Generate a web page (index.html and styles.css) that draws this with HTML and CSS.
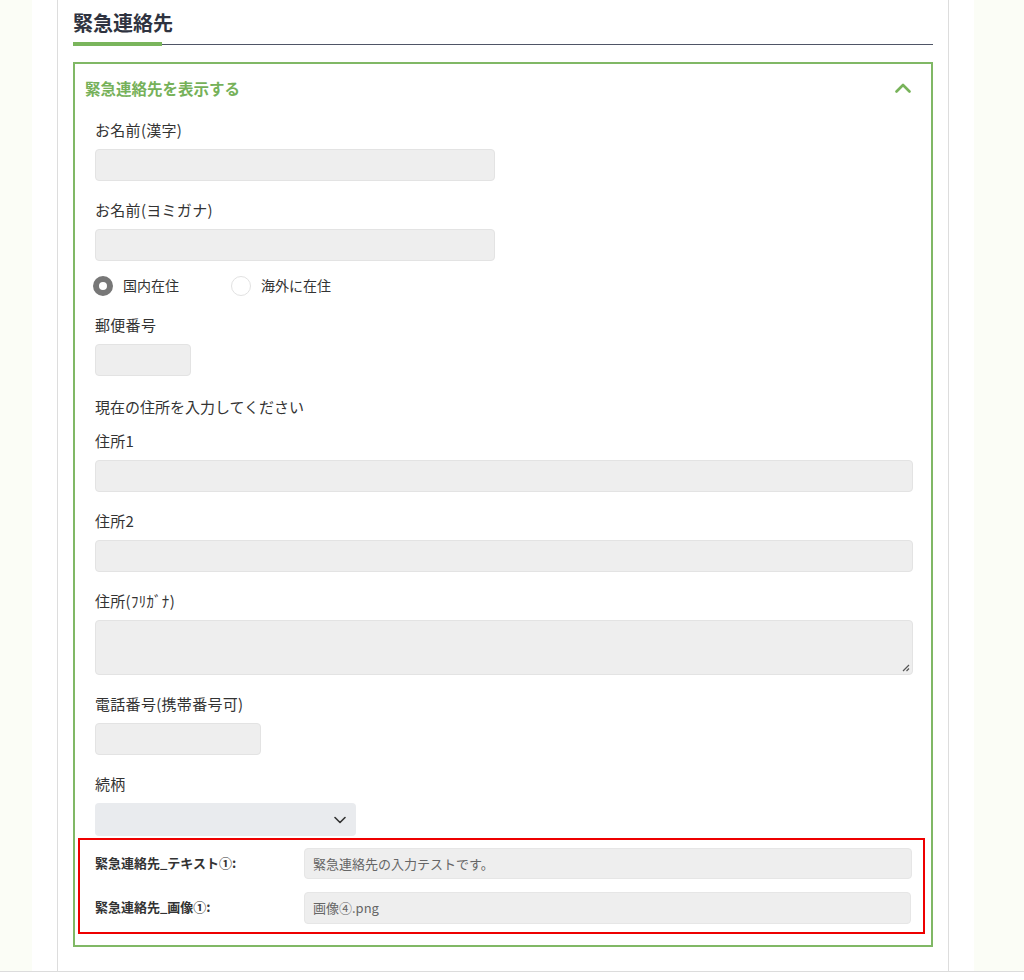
FILE: index.html
```html
<!DOCTYPE html>
<html lang="ja">
<head>
<meta charset="utf-8">
<title>緊急連絡先</title>
<link rel="stylesheet" href="styles.css">
</head>
<body>
<div class="page">
  <div class="column">
    <div class="card">
      <h2 class="section-title">緊急連絡先</h2>
      <div class="accordion">
        <div class="acc-head">
          <span class="acc-title">緊急連絡先を表示する</span>
          <svg class="acc-chevron" width="16" height="10" viewBox="0 0 16 10"><polyline points="1.5,8.5 8,2 14.5,8.5" fill="none" stroke="#78b35a" stroke-width="2.6" stroke-linecap="round" stroke-linejoin="round"/></svg>
        </div>
        <div class="acc-body">
          <div class="field">
            <label class="label">お名前(漢字)</label>
            <div class="input w400"></div>
          </div>
          <div class="field tight">
            <label class="label">お名前(ヨミガナ)</label>
            <div class="input w400"></div>
          </div>
          <div class="radios">
            <span class="radio"><span class="dot checked"></span><span class="rlabel">国内在住</span></span>
            <span class="radio"><span class="dot"></span><span class="rlabel">海外に在住</span></span>
          </div>
          <div class="field">
            <label class="label">郵便番号</label>
            <div class="input w96"></div>
          </div>
          <p class="note">現在の住所を入力してください</p>
          <div class="field">
            <label class="label">住所1</label>
            <div class="input full"></div>
          </div>
          <div class="field">
            <label class="label">住所2</label>
            <div class="input full"></div>
          </div>
          <div class="field">
            <label class="label">住所(ﾌﾘｶﾞﾅ)</label>
            <div class="input full textarea">
              <svg class="grip" width="8" height="8" viewBox="0 0 8 8"><path d="M7 1 L1 7 M7 4.5 L4.5 7" stroke="#555" stroke-width="1.2" fill="none"/></svg>
            </div>
          </div>
          <div class="field">
            <label class="label">電話番号(携帯番号可)</label>
            <div class="input w166"></div>
          </div>
          <div class="field last">
            <label class="label">続柄</label>
            <div class="select">
              <svg width="12" height="8" viewBox="0 0 12 8"><polyline points="1,1.5 6,6.5 11,1.5" fill="none" stroke="#333" stroke-width="1.6" stroke-linecap="round" stroke-linejoin="round"/></svg>
            </div>
          </div>
          <div class="highlight">
            <div class="hrow">
              <span class="hlabel">緊急連絡先_テキスト①:</span>
              <div class="hinput">緊急連絡先の入力テストです。</div>
            </div>
            <div class="hrow">
              <span class="hlabel">緊急連絡先_画像①:</span>
              <div class="hinput">画像④.png</div>
            </div>
          </div>
        </div>
      </div>
    </div>
  </div>
</div>
</body>
</html>
```

FILE: styles.css
```css
* { box-sizing: border-box; }
html, body { margin: 0; padding: 0; background: #ffffff; }
body {
  font-family: "Noto Sans CJK JP", "Noto Sans", sans-serif;
  color: #333333;
}
.page {
  height: 972px;
  background: #fbfdf6;
  border-bottom: 1px solid #dcdcdc;
  padding: 0 50px 0 32px;
}
.column {
  height: 100%;
  background: #ffffff;
  padding: 0 25px;
}
.card {
  height: 100%;
  border-left: 1px solid #dddddd;
  border-right: 1px solid #dddddd;
  padding: 8px 15px 0 15px;
}
.section-title {
  position: relative;
  margin: 0;
  font-size: 20px;
  font-weight: 700;
  line-height: 30px;
  padding-bottom: 6px;
  border-bottom: 1px solid #4f5566;
  color: #2f3340;
}
.section-title::after {
  content: "";
  position: absolute;
  left: 0;
  bottom: -2px;
  width: 89px;
  height: 4px;
  background: #7ab55c;
}
.accordion {
  margin-top: 17px;
  border: 2px solid #80b865;
}
.acc-head {
  height: 48px;
  display: flex;
  align-items: center;
  justify-content: space-between;
  padding: 0 20px 0 10px;
}
.acc-title {
  font-size: 15.5px;
  font-weight: 700;
  color: #76b159;
}
.acc-body {
  padding: 7px 18px 11px 20px;
}
.field { margin-bottom: 18px; }
.field.tight { margin-bottom: 13px; }
.field.last { margin-bottom: 2px; }
.label {
  display: block;
  font-size: 15px;
  line-height: 22px;
  margin-bottom: 8px;
  color: #333333;
  letter-spacing: 0.3px;
}
.input {
  height: 32px;
  background: #eeeeee;
  border: 1px solid #e3e3e3;
  border-radius: 4px;
}
.w400 { width: 400px; }
.w96 { width: 96px; }
.w166 { width: 166px; }
.full { width: 100%; }
.textarea {
  height: 55px;
  position: relative;
}
.grip {
  position: absolute;
  right: 2px;
  bottom: 2px;
}
.radios {
  display: flex;
  align-items: center;
  height: 24px;
  margin-left: -2px;
  margin-bottom: 16px;
}
.radio {
  display: flex;
  align-items: center;
  width: 138px;
}
.dot {
  width: 20px;
  height: 20px;
  border-radius: 50%;
  border: 1px solid #e2e2e2;
  background: #ffffff;
  margin-right: 10px;
}
.dot.checked {
  border: 6px solid #777777;
}
.rlabel {
  font-size: 14px;
  color: #333333;
  margin-top: -3px;
}
.note {
  margin: 0 0 12px 0;
  padding-top: 2px;
  font-size: 15px;
  line-height: 22px;
}
.select {
  width: 261px;
  height: 33px;
  background: #e9ebee;
  border-radius: 4px;
  display: flex;
  align-items: center;
  justify-content: flex-end;
  padding-right: 10px;
}
.highlight {
  margin: 0 -12px 0 -17px;
  border: 2px solid #ee0000;
  padding: 8px 11px 8px 15px;
  display: flex;
  flex-direction: column;
  gap: 13px;
}
.hrow {
  display: flex;
  align-items: center;
}
.hlabel {
  width: 209px;
  font-size: 13px;
  font-weight: 700;
  color: #333333;
  margin-top: -3px;
}
.hinput {
  flex: 1;
  height: 31px;
  background: #eeeeee;
  border: 1px solid #e6e6e6;
  border-radius: 4px;
  font-size: 13px;
  color: #666666;
  line-height: 29px;
  padding-left: 8px;
}
.hrow + .hrow .hinput { height: 32px; margin-right: 1px; }
```
